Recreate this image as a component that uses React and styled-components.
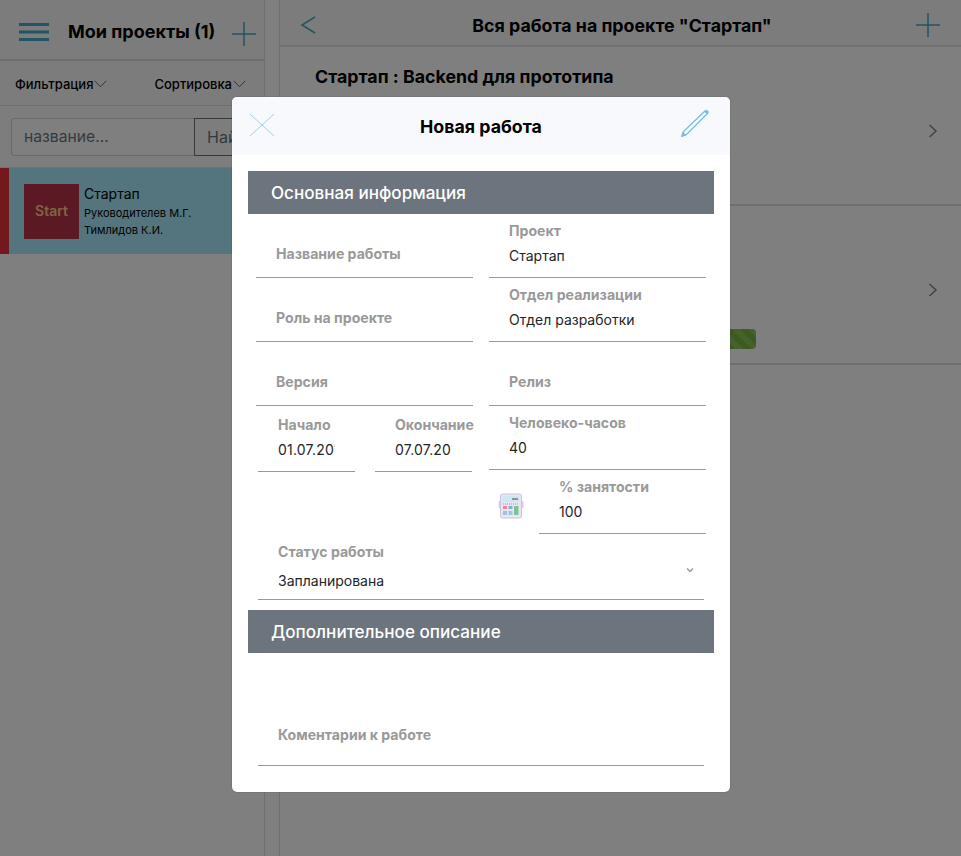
import React from "react";
import styled, { createGlobalStyle } from "styled-components";

const GlobalStyle = createGlobalStyle`
  html, body {
    margin: 0;
    padding: 0;
    background: #fff;
  }
  * {
    box-sizing: border-box;
  }
  body {
    font-family: Inter, "Noto Sans", sans-serif;
    color: #000;
  }
`;

const Page = styled.div`
  position: relative;
  display: flex;
  width: 961px;
  height: 856px;
  overflow: hidden;
  background: #fff;
`;

const Sidebar = styled.aside`
  width: 265px;
  flex: none;
  border-right: 1px solid #dedede;
  overflow: hidden;
`;

const Gutter = styled.div`
  width: 14px;
  flex: none;
  background: #fff;
`;

const SideHeader = styled.header`
  display: flex;
  align-items: center;
  height: 61px;
  padding: 4px 8px 0 19px;
  border-bottom: 2px solid #dcdcdc;
  background: #f8f8f8;
`;

const SideTitle = styled.h1`
  margin: 0 0 0 19px;
  flex: 1;
  font-size: 18px;
  font-weight: 700;
  white-space: nowrap;
`;

const AddIcon = styled.span`
  display: flex;
  margin-top: 4px;
`;

const FilterBar = styled.div`
  display: flex;
  justify-content: space-between;
  align-items: center;
  height: 45px;
  padding: 2px 18px 0 15px;
  border-bottom: 1px solid #dedede;
  background: #f8f8f8;
`;

const FilterItem = styled.span`
  display: flex;
  align-items: center;
  gap: 1px;
  font-size: 13px;
  font-weight: 500;
`;

const SearchRow = styled.div`
  display: flex;
  height: 62px;
  padding: 12px 0 0 11px;
  border-bottom: 1px solid #e4e4e4;
  background: #fafafa;
`;

const SearchInput = styled.div`
  width: 183px;
  height: 38px;
  flex: none;
  padding: 0 12px;
  border: 1px solid #ced4da;
  border-right: 0;
  border-radius: 4px 0 0 4px;
  background: #fff;
  color: #6c757d;
  font-size: 15.7px;
  line-height: 36px;
`;

const SearchButton = styled.div`
  width: 80px;
  height: 38px;
  flex: none;
  padding: 0 12px;
  border: 1px solid #6c757d;
  color: #6c757d;
  font-size: 16px;
  line-height: 36px;
`;

const ProjectCard = styled.div`
  display: flex;
  align-items: center;
  height: 86px;
  padding-left: 15px;
  border-left: 9px solid #e6323c;
  background: #a9ebfd;
`;

const ProjectLogo = styled.div`
  display: flex;
  align-items: center;
  justify-content: center;
  width: 55px;
  height: 55px;
  flex: none;
  padding-bottom: 2px;
  background: #b43246;
  color: #ffc88a;
  font-size: 14px;
  font-weight: 600;
`;

const ProjectInfo = styled.div`
  margin-left: 5px;
`;

const ProjectName = styled.div`
  font-size: 14px;
  line-height: 20px;
`;

const ProjectPerson = styled.div`
  position: relative;
  font-size: 11px;
  line-height: 17px;
  top: 1px;
`;

const Main = styled.main`
  flex: 1;
  border-left: 1px solid #dedede;
`;

const MainHeader = styled.header`
  display: flex;
  align-items: center;
  height: 47px;
  padding: 5px 21px 0 20px;
  border-bottom: 2px solid #e4e4e4;
  background: #f8f8f8;
`;

const MainTitle = styled.h2`
  flex: 1;
  margin: 0;
  padding-left: 10px;
  font-size: 17.8px;
  font-weight: 700;
  text-align: center;
`;

const WorkCard = styled.section`
  position: relative;
  height: 159px;
  padding: 19px 35px 0;
  border-bottom: 2px solid #dcdcdc;
`;

const WorkTitle = styled.h3`
  margin: 0;
  font-size: 17.8px;
  font-weight: 700;
  line-height: 22px;
`;

const WorkText = styled.p`
  margin: 7px 0 0;
  font-size: 14px;
`;

const CardArrow = styled.svg`
  position: absolute;
  right: 23px;
  top: 77px;
`;

const Progress = styled.div`
  position: absolute;
  left: 35px;
  right: 205px;
  top: 123px;
  height: 20px;
  border-radius: 4px;
  background-color: #78b83e;
  background-image: linear-gradient(
    45deg,
    rgba(255, 255, 255, 0.15) 25%,
    transparent 25%,
    transparent 50%,
    rgba(255, 255, 255, 0.15) 50%,
    rgba(255, 255, 255, 0.15) 75%,
    transparent 75%
  );
  background-size: 16px 16px;
`;

const Backdrop = styled.div`
  position: absolute;
  inset: 0;
  background: rgba(0, 0, 0, 0.5);
`;

const Modal = styled.div`
  position: absolute;
  left: 232px;
  top: 97px;
  width: 498px;
  height: 695px;
  overflow: hidden;
  border-radius: 5px;
  background: #fff;
  box-shadow: 0 0 1px rgba(0, 0, 0, 0.6);
`;

const ModalHeader = styled.header`
  display: flex;
  align-items: center;
  justify-content: space-between;
  height: 58px;
  padding: 0 20px 0 17px;
  background: #f7f9fc;
`;

const ModalTitle = styled.h2`
  margin: 0 0 0 7px;
  font-size: 17.8px;
  font-weight: 700;
`;

const PencilIcon = styled.svg`
  width: 30px;
  height: 30px;
  margin-bottom: 6px;
  flex: none;
`;

const ModalBody = styled.div`
  padding: 16px 16px 0;
`;

const SectionBar = styled.div`
  height: 43px;
  padding-left: 23px;
  background: #6c757d;
  color: #fff;
  font-size: 17.1px;
  font-weight: 500;
  line-height: 43px;
`;

const FormGrid = styled.div`
  display: grid;
  grid-template-columns: 217px 217px;
  grid-auto-rows: 64px;
  column-gap: 16px;
  margin-left: 8px;
`;

const Field = styled.div`
  display: flex;
  flex-direction: column;
  justify-content: flex-end;
  min-width: 0;
  padding: 0 0 ${(p) => (p.$empty ? 13 : 11)}px 20px;
  border-bottom: 1px solid #999;
`;

const Label = styled.label`
  color: #999;
  font-size: 14.1px;
  font-weight: 700;
  line-height: 20px;
  white-space: nowrap;
`;

const Value = styled.div`
  margin-top: 5px;
  overflow: hidden;
  color: #212529;
  font-size: 14px;
  line-height: 20px;
  white-space: nowrap;
`;

const DatePair = styled.div`
  display: flex;
  gap: 20px;
  height: 66px;
  margin-left: 2px;
`;

const DateField = styled(Field)`
  width: 97px;
  flex: none;
  & ${Value} {
    width: 57px;
    letter-spacing: 0.2px;
  }
`;

const LoadCell = styled.div`
  display: flex;
  align-items: center;
`;

const CalcIcon = styled.svg`
  width: 26px;
  height: 26px;
  margin: 8px 15px 0 9px;
  flex: none;
`;

const LoadField = styled(Field)`
  flex: 1;
  height: 100%;
`;

const StatusField = styled(Field)`
  position: relative;
  width: 446px;
  height: 66px;
  margin-left: 10px;
  padding-bottom: 8px;
  & ${Value} {
    margin-top: 9px;
  }
`;

const SelectArrow = styled.svg`
  position: absolute;
  right: 10px;
  top: 33px;
`;

const SpacedBar = styled(SectionBar)`
  margin-top: 10px;
`;

const CommentField = styled(Field)`
  height: 113px;
  margin: 0 10px;
  padding-bottom: 20px;
`;

const Line = ({ d, color = "#45a9c9", width = 1.5, size = 24, box = 24 }) => (
  <svg width={size} height={size} viewBox={`0 0 ${box} ${box}`} fill="none" style={{ flex: "none" }}>
    <path d={d} stroke={color} strokeWidth={width} />
  </svg>
);

const Caret = () => (
  <svg width="13" height="8" viewBox="0 0 13 8" fill="none">
    <path d="M.7.8l5.8 6 5.8-6" stroke="#666" strokeWidth="1" />
  </svg>
);

const Burger = () => (
  <svg width="30" height="18" viewBox="0 0 30 18">
    <path d="M0 1.5h30M0 9h30M0 16.5h30" stroke="#45a9c9" strokeWidth="3" />
  </svg>
);

const Arrow = () => (
  <CardArrow width="10" height="14" viewBox="0 0 10 14" fill="none">
    <path d="M1.5 1l6.5 6-6.5 6" stroke="#888" strokeWidth="1.6" />
  </CardArrow>
);

export default function App() {
  return (
    <Page>
      <GlobalStyle />
      <Sidebar>
        <SideHeader>
          <Burger />
          <SideTitle>Мои проекты (1)</SideTitle>
          <AddIcon>
            <Line d="M12 0v24M0 12h24" />
          </AddIcon>
        </SideHeader>
        <FilterBar>
          <FilterItem>
            Фильтрация
            <Caret />
          </FilterItem>
          <FilterItem>
            Сортировка
            <Caret />
          </FilterItem>
        </FilterBar>
        <SearchRow>
          <SearchInput>название...</SearchInput>
          <SearchButton>Найти</SearchButton>
        </SearchRow>
        <ProjectCard>
          <ProjectLogo>Start</ProjectLogo>
          <ProjectInfo>
            <ProjectName>Стартап</ProjectName>
            <ProjectPerson>Руководителев М.Г.</ProjectPerson>
            <ProjectPerson>Тимлидов К.И.</ProjectPerson>
          </ProjectInfo>
        </ProjectCard>
      </Sidebar>
      <Gutter />
      <Main>
        <MainHeader>
          <Line d="M15 1L2 9l13 8" size={18} box={18} />
          <MainTitle>Вся работа на проекте "Стартап"</MainTitle>
          <Line d="M12 0v24M0 12h24" />
        </MainHeader>
        <WorkCard>
          <WorkTitle>Стартап : Backend для прототипа</WorkTitle>
          <WorkText>Отдел разработки</WorkText>
          <Arrow />
        </WorkCard>
        <WorkCard>
          <Progress />
          <Arrow />
        </WorkCard>
      </Main>
      <Backdrop />
      <Modal>
        <ModalHeader>
          <Line d="M1 1l24 22M25 1L1 23" color="#9cd3ec" width={1} size={26} box={26} />
          <ModalTitle>Новая работа</ModalTitle>
          <PencilIcon viewBox="0 0 30 30" fill="none">
            <path d="M25 3l2.5 2.500L7 26l-5 2 2-5z" stroke="#74bde2" strokeWidth="1.3" />
            <path d="M25.500 2.500l2.500 2.500" stroke="#74bde2" strokeWidth="3" />
            <path d="M1 29l1.500-5.500 4 4z" fill="#74bde2" />
          </PencilIcon>
        </ModalHeader>
        <ModalBody>
          <SectionBar>Основная информация</SectionBar>
          <FormGrid>
            <Field $empty>
              <Label>Название работы</Label>
            </Field>
            <Field>
              <Label>Проект</Label>
              <Value>Стартап</Value>
            </Field>
            <Field $empty>
              <Label>Роль на проекте</Label>
            </Field>
            <Field>
              <Label>Отдел реализации</Label>
              <Value>Отдел разработки</Value>
            </Field>
            <Field $empty>
              <Label>Версия</Label>
            </Field>
            <Field $empty>
              <Label>Релиз</Label>
            </Field>
            <DatePair>
              <DateField>
                <Label>Начало</Label>
                <Value>01.07.2019</Value>
              </DateField>
              <DateField>
                <Label>Окончание</Label>
                <Value>07.07.2019</Value>
              </DateField>
            </DatePair>
            <Field>
              <Label>Человеко-часов</Label>
              <Value>40</Value>
            </Field>
            <div />
            <LoadCell>
              <CalcIcon viewBox="0 0 26 26">
                <rect x="0.500" y="8" width="25" height="7" rx="1" fill="#d9cfe6" />
                <rect x="2.500" y="1" width="21" height="24" rx="2" fill="#e9e6f2" stroke="#c9c3dc" />
                <rect x="4.500" y="3" width="17" height="6" fill="#cfe6f7" />
                <path d="M14 6h6" stroke="#777" strokeWidth="1.5" />
                <path d="M5 11h16" stroke="#999" strokeDasharray="1 1" />
                <rect x="5" y="13" width="4" height="3" fill="#e58a9a" />
                <rect x="10.500" y="13" width="4" height="3" fill="#7fb3d6" />
                <rect x="5" y="18" width="4" height="4" fill="#9fc4dc" />
                <rect x="10.500" y="18" width="4" height="4" fill="#9fc4dc" />
                <rect x="16" y="13" width="4.500" height="9" fill="#7cc39a" />
              </CalcIcon>
              <LoadField>
                <Label>% занятости</Label>
                <Value>100</Value>
              </LoadField>
            </LoadCell>
          </FormGrid>
          <StatusField>
            <Label>Статус работы</Label>
            <Value>Запланирована</Value>
            <SelectArrow width="8" height="6" viewBox="0 0 8 6" fill="none">
              <path d="M1 1.500l3 3 3-3" stroke="#999" strokeWidth="1.4" />
            </SelectArrow>
          </StatusField>
          <SpacedBar>Дополнительное описание</SpacedBar>
          <CommentField $empty>
            <Label>Коментарии к работе</Label>
          </CommentField>
        </ModalBody>
      </Modal>
    </Page>
  );
}
